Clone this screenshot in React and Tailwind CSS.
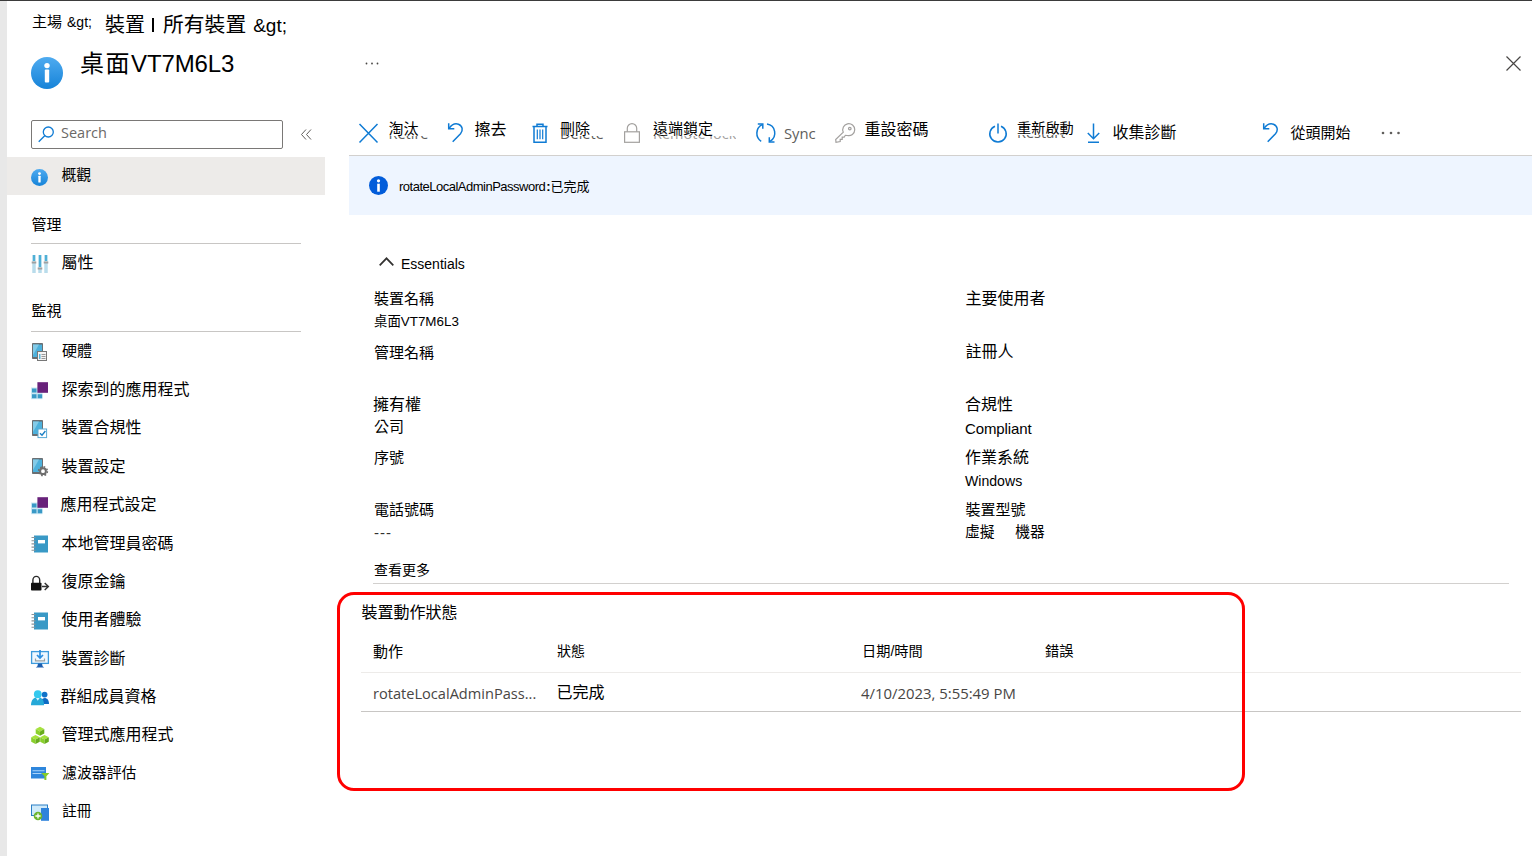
import clsx from 'clsx'

const BLUE = '#0f7bd4'

function InfoBadge({ size, id }) {
  return (
    <svg width={size} height={size} viewBox="0 0 32 32" className="shrink-0" aria-hidden>
      <defs>
        <linearGradient id={id} x1="0" y1="0" x2="0" y2="1">
          <stop offset="0" stopColor="#4fabf0" />
          <stop offset="1" stopColor="#1683d8" />
        </linearGradient>
      </defs>
      <circle cx="16" cy="16" r="16" fill={`url(#${id})`} />
      <circle cx="16" cy="8.6" r="2.7" fill="#fff" />
      <rect x="13.8" y="12.6" width="4.4" height="13" rx="1" fill="#fff" />
    </svg>
  )
}

/* ---------- sidebar icons, all on an 18px grid ---------- */

function Icon18({ children }) {
  return (
    <svg width="18" height="18" viewBox="0 0 18 18" className="shrink-0 overflow-visible" aria-hidden>
      {children}
    </svg>
  )
}

function SlidersIcon() {
  return (
    <Icon18>
      <path d="M1 0h4v18H1zM7 0h4v18H7zM13 0h4v18h-4z" fill="#dceef5" />
      <path d="M1.5 8h3v10h-3zM7.5 14h3v4h-3zM13.5 8h3v10h-3z" fill="#b9dceb" />
      <path d="M1.8 0h2.4v6H1.8zM7.8 0h2.4v12H7.8zM13.8 0h2.4v6h-2.4z" fill="#4fb0d6" />
      <path d="M0.7 6.5h4.6v2H0.7zM6.7 12.5h4.6v2H6.7zM12.7 6.5h4.6v2h-4.6z" fill="#a0a0a0" />
    </Icon18>
  )
}

function Phone() {
  return (
    <>
      <rect x="1" y="0" width="11" height="16" rx="0.8" fill="#6a6f73" />
      <rect x="2" y="1.6" width="9" height="12.4" fill="#4db1dc" />
      <path d="M2 1.6h6L2 12z" fill="#83cbe8" />
    </>
  )
}

function HardwareIcon() {
  return (
    <Icon18>
      <Phone />
      <rect x="6.5" y="8.5" width="9" height="9" fill="#f3f3f3" stroke="#777" />
      <path d="M8 11h1.5v5H8z" fill="#59b4d9" />
      <path d="M10.5 11.5h4M10.5 13.5h4M10.5 15.5h4" stroke="#999" />
    </Icon18>
  )
}

function ComplianceIcon() {
  return (
    <Icon18>
      <Phone />
      <rect x="7" y="9" width="8.6" height="8.6" fill="#fff" stroke="#59a9d4" />
      <path d="M9 13.2l2 2 3.4-4.2" fill="none" stroke="#1b7fc4" strokeWidth="1.4" />
    </Icon18>
  )
}

function ConfigIcon() {
  return (
    <Icon18>
      <Phone />
      <circle cx="12" cy="13.2" r="4.4" fill="none" stroke="#6e6e6e" strokeWidth="1.5" strokeDasharray="1.73 1.73" />
      <circle cx="12" cy="13.2" r="2.9" fill="#fff" stroke="#6e6e6e" strokeWidth="2" />
    </Icon18>
  )
}

function AppsIcon() {
  return (
    <Icon18>
      <path d="M0 5.5h11.5v11.7H0z" fill="#c9e6f3" />
      <path d="M1 6.5h4.5v4H1zM1 12.2h4.5v4H1zM6.7 12.2h4.5v4H6.7z" fill="#3999c6" />
      <rect x="6.4" y="0.2" width="10.6" height="10.6" fill="#68217a" />
    </Icon18>
  )
}

function NotebookIcon() {
  return (
    <Icon18>
      <rect x="3" y="0.5" width="14" height="17" fill="#3999c6" />
      <rect x="7" y="5" width="7" height="3.4" fill="#fff" />
      <path d="M0.5 2.5h4M0.5 5.7h4M0.5 8.9h4M0.5 12.1h4M0.5 15.3h4" stroke="#8b9499" strokeWidth="1.1" />
    </Icon18>
  )
}

function LockArrowIcon() {
  return (
    <Icon18>
      <path d="M1.9 9.5V6a3.4 3.6 0 0 1 6.8 0v3.5" fill="none" stroke="#2a2a2a" strokeWidth="1.4" />
      <rect x="0" y="8.8" width="10.5" height="7.7" rx="0.8" fill="#111" />
      <path d="M11 12.5h6.4M13.7 8.9l3.7 3.6-3.7 3.6" fill="none" stroke="#333" strokeWidth="1.4" />
    </Icon18>
  )
}

function DiagnosticsIcon() {
  return (
    <Icon18>
      <rect x="0.6" y="1.6" width="16.8" height="11.8" fill="#eef8ff" stroke="#3d9bdc" strokeWidth="1.3" />
      <path d="M9 0v7.4M6 5l3 3 3-3" fill="none" stroke="#2d8fe0" strokeWidth="1.7" />
      <path d="M4.5 8.5v2.3h9V8.5" fill="none" stroke="#9aa0a4" strokeWidth="1.2" />
      <path d="M7 13.6h4l.6 2.7 1.6 1.2H4.8l1.6-1.2z" fill="#1d5fb0" />
    </Icon18>
  )
}

function GroupIcon() {
  return (
    <Icon18>
      <circle cx="13.6" cy="5.6" r="2.9" fill="#1173c9" />
      <path d="M9.8 15c0-4 1.3-6 3.8-6s4.4 2 4.4 6z" fill="#0f6cc4" />
      <path d="M0 16.3c0-5 2.3-8 6.7-8s6.4 3 6.4 8z" fill="#26a9d8" />
      <circle cx="6.8" cy="5.2" r="3.9" fill="#35c9ee" />
      <path d="M5 9l1.8 2.8L8.6 9z" fill="#d8f5fc" />
    </Icon18>
  )
}

function Cube({ x, y }) {
  return (
    <g transform={`translate(${x} ${y})`}>
      <path d="M4.3 0l4.3 2.3-4.3 2.3L0 2.3z" fill="#a6e23c" />
      <path d="M0 2.3l4.3 2.3v4.4L0 6.7z" fill="#8ad02c" />
      <path d="M8.6 2.3l-4.3 2.3v4.4l4.3-2.3z" fill="#68ad1c" />
    </g>
  )
}

function CubesIcon() {
  return (
    <Icon18>
      <Cube x={4.7} y={-0.2} />
      <Cube x={0.2} y={8} />
      <Cube x={9.2} y={8} />
    </Icon18>
  )
}

function FilterIcon() {
  return (
    <Icon18>
      <rect x="0" y="2" width="15" height="11.5" fill="#2e86dc" />
      <path d="M1.5 5.7h12M1.5 8.5h9" stroke="#a9d3fb" strokeWidth="1.1" />
      <path d="M10.3 8h8.1l-3 3.3V15h-2v-3.7z" fill="#86cc2a" />
    </Icon18>
  )
}

function EnrollIcon() {
  return (
    <Icon18>
      <rect x="0.5" y="1" width="16" height="10.5" fill="#cfeafa" stroke="#2a7fc6" />
      <rect x="10" y="4" width="8" height="12.8" fill="#2f83db" />
      <circle cx="7" cy="12" r="4.3" fill="#6cb52d" />
      <path d="M7 9.4v5.2M4.4 12h5.2" stroke="#fff" strokeWidth="1.3" />
    </Icon18>
  )
}

/* ---------- command bar icons ---------- */

function Stroke({ w, color = BLUE, children, sw = 1.5 }) {
  return (
    <svg
      width={w}
      height="20"
      viewBox={`0 0 ${w} 20`}
      fill="none"
      stroke={color}
      strokeWidth={sw}
      className="shrink-0 overflow-visible"
      aria-hidden
    >
      {children}
    </svg>
  )
}

function CrossIcon() {
  return (
    <Stroke w={19}>
      <path d="M0.5 1l18 18.5M18.5 1l-18 18.5" />
    </Stroke>
  )
}

function UndoIcon() {
  return (
    <Stroke w={15}>
      <path d="M0.7 0.3v5.4h5.6" />
      <path d="M0.9 5.5C3.5 2 7 -0.1 10.5 1.3c4.2 1.7 4.8 6.3 2 9.4L4.7 18.8" />
    </Stroke>
  )
}

function TrashIcon() {
  return (
    <Stroke w={16}>
      <path d="M0.5 3.6h15M5 3.4V1.2h6v2.2" />
      <path d="M2 3.6v15.6h12V3.6" />
      <path d="M5.3 6.5v9.8M8 6.5v9.8M10.7 6.5v9.8" strokeWidth="1.2" />
    </Stroke>
  )
}

function LockIcon() {
  return (
    <Stroke w={16} color="#a3a19f" sw={1.2}>
      <rect x="0.6" y="8.8" width="14.8" height="10.5" />
      <path d="M3.3 8.8V5.3a4.7 4.7 0 0 1 9.4 0v3.5" />
    </Stroke>
  )
}

function SyncIcon() {
  return (
    <Stroke w={20}>
      <path d="M5.2 18.3C-0.8 14.5-0.7 5.2 6.2 1.7" />
      <path d="M1.8 1.1h5v4.7" />
      <path d="M11 1c8.5 1.3 10.8 12.3 3 17.4" />
      <path d="M18.5 19h-5.2v-4.7" />
    </Stroke>
  )
}

function KeyIcon() {
  return (
    <Stroke w={20} color="#a3a19f" sw={1.2}>
      <path d="M8.3 9.2A6 6 0 1 1 12.3 12.5L10.3 12.3 9.2 14.2H7.2V16.3H5.2V18.6L1 19.3 0.7 16.6z" />
      <circle cx="14.8" cy="5.6" r="1.3" />
    </Stroke>
  )
}

function PowerIcon() {
  return (
    <Stroke w={18}>
      <path d="M9 0.5v10" />
      <path d="M6 3.2a8.2 8.2 0 1 0 6 0" />
    </Stroke>
  )
}

function DownloadIcon() {
  return (
    <Stroke w={14}>
      <path d="M6.5 0.5v15.3M0.8 10l5.7 5.8L12.2 10M1 19.3h11" />
    </Stroke>
  )
}

const cjk = "font-['Liberation_Sans','Noto_Sans_CJK_TC',sans-serif]"
const segoe = "font-['Open_Sans','Noto_Sans_CJK_TC',sans-serif]"

const MONITOR_ITEMS = [
  { label: '硬體', Icon: HardwareIcon, cls: '-mt-[3px] ml-[13px] text-[15px]' },
  { label: '探索到的應用程式', Icon: AppsIcon, cls: '-mt-px ml-[12.5px] text-[16px]' },
  { label: '裝置合規性', Icon: ComplianceIcon, cls: '-mt-px ml-[12.5px] text-[16px]' },
  { label: '裝置設定', Icon: ConfigIcon, cls: '-mt-px ml-[12.5px] text-[16px]' },
  { label: '應用程式設定', Icon: AppsIcon, cls: '-mt-px ml-[11.5px] text-[16px]' },
  { label: '本地管理員密碼', Icon: NotebookIcon, cls: '-mt-px ml-[12.5px] text-[16px]' },
  { label: '復原金鑰', Icon: LockArrowIcon, cls: '-mt-px ml-[12.5px] text-[16px]' },
  { label: '使用者體驗', Icon: NotebookIcon, cls: '-mt-px ml-[12.5px] text-[16px]' },
  { label: '裝置診斷', Icon: DiagnosticsIcon, cls: '-mt-px ml-[12.5px] text-[16px]' },
  { label: '群組成員資格', Icon: GroupIcon, cls: '-mt-px ml-[11.5px] text-[16px]' },
  { label: '管理式應用程式', Icon: CubesIcon, cls: '-mt-[2px] ml-[12.5px] text-[16px]' },
  { label: '濾波器評估', Icon: FilterIcon, cls: '-mt-[2px] ml-[13px] text-[14.9px]' },
  { label: '註冊', Icon: EnrollIcon, cls: '-mt-[3px] ml-[13px] text-[14.8px]' },
]

// ghost = lower edge of the English caption that shows under the translated one
const COMMANDS = [
  { label: '淘汰', Icon: CrossIcon, width: 'w-[89px]', text: 'ml-[10.5px] text-[15px] -mt-[7px]', ghost: 'Retire' },
  { label: '擦去', Icon: UndoIcon, width: 'w-[84px]', text: 'ml-[11.5px] text-[16px] -mt-[6px]' },
  { label: '刪除', Icon: TrashIcon, width: 'w-[92px]', text: 'ml-[12px] text-[15px] -mt-[7px]', ghost: 'Delete' },
  {
    label: '遠端鎖定',
    Icon: LockIcon,
    width: 'w-[132px]',
    text: 'ml-[13px] text-[15px] -mt-[7px]',
    ghost: 'Remote lock',
    ghostColor: 'text-[#a3a19f]',
  },
  { label: 'Sync', Icon: SyncIcon, width: 'w-[79px]', latin: true, text: 'ml-[8px] text-[14.8px] mt-px' },
  { label: '重設密碼', Icon: KeyIcon, width: 'w-[154px]', text: 'ml-[9.5px] text-[16px] -mt-[6px]' },
  { label: '重新啟動', Icon: PowerIcon, width: 'w-[98px]', text: 'ml-[10px] text-[14.2px] -mt-[9px]', ghost: 'Restart' },
  { label: '收集診斷', Icon: DownloadIcon, width: 'w-[176px]', text: 'ml-[11.5px] text-[16px] mt-px' },
  { label: '從頭開始', Icon: UndoIcon, width: 'w-[118px]', text: 'ml-[12.5px] text-[15px]' },
]

const ESSENTIALS = [
  [
    { label: '裝置名稱', value: '桌面VT7M6L3', labelCls: 'text-[15px]', valueCls: 'pt-px text-[13.4px]' },
    { label: '管理名稱', labelCls: 'pt-px text-[15px]' },
    { label: '擁有權', value: '公司', labelCls: '-ml-px text-[16px]', valueCls: 'text-[15px]' },
    { label: '序號', labelCls: 'pt-px text-[15px]' },
    { label: '電話號碼', value: '---', labelCls: 'text-[15px]', valueCls: 'pt-px text-[15px] tracking-[1px] text-[#323130]' },
  ],
  [
    { label: '主要使用者', labelCls: 'text-[16px]' },
    { label: '註冊人', labelCls: 'text-[16px]' },
    { label: '合規性', value: 'Compliant', labelCls: '-ml-[0.5px] text-[16px]', valueCls: '-ml-[0.5px] pt-[2px] text-[15px] tracking-[-0.1px]' },
    { label: '作業系統', value: 'Windows', labelCls: '-ml-[0.5px] pt-px text-[16px]', valueCls: '-ml-[0.5px] pt-px text-[14.1px]' },
    { label: '裝置型號', value: '虛擬     機器', labelCls: 'text-[15px]', valueCls: '-ml-[0.5px] text-[14.8px]' },
  ],
]

function CommandButton({ label, Icon, width, text, latin, ghost, ghostColor = 'text-[#605e5c]' }) {
  return (
    <div className={clsx('flex h-[46px] items-center', width)}>
      <Icon />
      <span className={clsx('relative whitespace-nowrap leading-5', text, latin ? `${segoe} text-[#605e5c]` : 'text-black')}>
        {label}
        {ghost && (
          <span className={clsx('absolute left-0 top-[17px] flex h-[3px] items-end overflow-hidden text-[14.5px]', segoe, ghostColor)}>
            <span className="leading-[11px]">{ghost}</span>
          </span>
        )}
      </span>
    </div>
  )
}

function Sidebar() {
  return (
    <aside className="w-[318px] shrink-0">
      <div className="flex h-[47px] items-start pl-6 pt-[10px]">
        <div className="flex h-[29px] w-[252px] items-center rounded-[2px] border border-[#7a7876] pl-[6px]">
          <svg width="17" height="17" viewBox="0 0 17 17" fill="none" stroke={BLUE} strokeWidth="1.3" aria-hidden>
            <circle cx="10.3" cy="6" r="5" />
            <path d="M6.7 9.7l-6 6" />
          </svg>
          <span className={clsx('-mt-[3px] ml-[6px] text-[14.5px] leading-5 text-[#6b6967]', segoe)}>Search</span>
        </div>
        <svg width="11" height="11" viewBox="0 0 11 11" fill="none" stroke="#605e5c" className="ml-[18px] mt-[9px]" aria-hidden>
          <path d="M5 0.5l-4.5 5 4.5 5M10 0.5l-4.5 5 4.5 5" />
        </svg>
      </div>

      <div className="flex h-[38px] items-center bg-[#edebe9] pl-6">
        <div className="mt-[2px]">
          <InfoBadge size={17} id="navInfo" />
        </div>
        <span className="-mt-[2px] ml-[13.5px] text-[14.8px] leading-5">概觀</span>
      </div>

      <div className="ml-6 flex h-[49px] w-[270px] items-center border-b border-[#c8c6c4] pl-[0.5px] pt-[11px] text-[15px] leading-5">
        管理
      </div>
      <div className="flex h-[38px] items-center pl-6 pt-[2px]">
        <SlidersIcon />
        <span className="-mt-[3px] ml-[12.5px] text-[16px] leading-5">屬性</span>
      </div>
      <div className="ml-6 flex h-[50px] w-[270px] items-center border-b border-[#c8c6c4] pl-[0.5px] pt-[9px] text-[15px] leading-5">
        監視
      </div>
      <nav className="pt-px">
        {MONITOR_ITEMS.map(({ label, Icon, cls }) => (
          <div key={label} className="flex h-[38.4px] items-center pl-6">
            <Icon />
            <span className={clsx('whitespace-nowrap leading-5', cls)}>{label}</span>
          </div>
        ))}
      </nav>
    </aside>
  )
}

function Essentials() {
  return (
    <section className="pl-[25px]">
      <div className="flex h-[72px] items-end pb-[13px] pl-[5px]">
        <svg width="15" height="9" viewBox="0 0 15 9" fill="none" stroke="#323130" strokeWidth="1.7" className="mb-[8px]" aria-hidden>
          <path d="M0.7 8.3l6.8-7 6.8 7" />
        </svg>
        <span className="ml-[7px] text-[14px] leading-5">Essentials</span>
      </div>
      <div className="flex">
        {ESSENTIALS.map((column, i) => (
          <div key={i} className={i === 0 ? 'w-[591.5px]' : ''}>
            {column.map((item) => (
              <dl key={item.label} className="h-[52.8px]">
                <dt className={clsx('leading-[23px]', item.labelCls)}>{item.label}</dt>
                {item.value && <dd className={clsx('whitespace-pre leading-[22px]', item.valueCls)}>{item.value}</dd>}
              </dl>
            ))}
          </div>
        ))}
      </div>
      <div className="-ml-px mr-[23px] flex h-[33px] items-end border-b border-[#d2d0ce] pb-[3px] pl-px text-[14px] leading-5">
        查看更多
      </div>
    </section>
  )
}

function ActionStatus() {
  return (
    <section className="relative mr-[11px] pl-3">
      {/* red call-out round the status table */}
      <div className="pointer-events-none absolute -left-[12px] top-[8px] h-[199px] w-[908px] rounded-[17px] border-[3px] border-[#ff0000]" />
      <h2 className="pl-[0.5px] pt-[19px] text-[16px] leading-5">裝置動作狀態</h2>
      <div className="grid h-[50px] grid-cols-[184px_305px_183px_1fr] items-center border-b border-[#edebe9] pl-3 pt-[8px] leading-5">
        <span className="pt-px text-[15px]">動作</span>
        <span className="text-[14px]">狀態</span>
        <span className="-mt-px text-[14.2px]">日期/時間</span>
        <span className="text-[14.2px]">錯誤</span>
      </div>
      <div className="grid h-[39px] grid-cols-[184px_304px_183px_1fr] items-center border-b border-[#c8c6c4] pl-3 pt-[2px] leading-5">
        <span className={clsx('text-[14.6px] text-[#484644]', segoe)}>rotateLocalAdminPass...</span>
        <span className="-ml-[0.5px] text-[16px]">已完成</span>
        <span className={clsx('text-[14.9px] text-[#484644]', segoe)}>4/10/2023, 5:55:49 PM</span>
      </div>
    </section>
  )
}

export default function App() {
  return (
    <div className={clsx('h-[856px] w-[1532px] overflow-hidden border-t border-t-[#3b3b3b] bg-white text-black', cjk)}>
      <div className="h-full border-l-[7px] border-[#e8e8e8]">
        <header className="h-[109px] pl-6">
          <div className="flex h-[43px] items-center whitespace-nowrap">
            <span className="-mt-px ml-px w-[73px] text-[15px] leading-5">
              主場<span className="ml-[5px] text-[14px]">&amp;gt;</span>
            </span>
            <span className="mt-[4px] text-[20px] leading-6">裝置</span>
            <span className="ml-[7px] mt-[5px] h-[14px] w-[2px] bg-black" />
            <span className="ml-[9px] mt-[4px] text-[20.8px] leading-6">所有裝置</span>
            <span className="ml-[7px] mt-[6px] text-[19px] leading-6">&amp;gt;</span>
          </div>
          <div className="flex items-start">
            <div className="mt-[13px]">
              <InfoBadge size={32} id="titleInfo" />
            </div>
            <h1 className="ml-[17px] mt-[4px] w-[285px] whitespace-nowrap text-[24px] leading-8 tracking-[-0.1px]">
              <span className="tracking-[1.5px]">桌面</span>VT7M6L3
            </h1>
            <svg width="14" height="3" viewBox="0 0 14 3" fill="#484644" className="mt-[18px]" aria-hidden>
              <circle cx="1.5" cy="1.5" r="0.9" />
              <circle cx="7" cy="1.5" r="0.9" />
              <circle cx="12.5" cy="1.5" r="0.9" />
            </svg>
            <svg width="15" height="15" viewBox="0 0 15 15" stroke="#484644" strokeWidth="1.2" className="ml-auto mr-[11px] mt-[12px]" aria-hidden>
              <path d="M0.5 0.5l14 14M14.5 0.5l-14 14" />
            </svg>
          </div>
        </header>

        <div className="flex">
          <Sidebar />
          <main className="ml-6 min-w-0 flex-1">
            <div className="flex h-[46px] items-center border-b border-[#d2d0ce] pl-[10px]">
              {COMMANDS.map((cmd) => (
                <CommandButton key={cmd.label} {...cmd} />
              ))}
              <svg width="20" height="4" viewBox="0 0 20 4" fill="#605e5c" aria-hidden>
                <circle cx="2" cy="2" r="1.3" />
                <circle cx="10" cy="2" r="1.3" />
                <circle cx="17.5" cy="2" r="1.3" />
              </svg>
            </div>
            <div className="flex h-[59px] items-center bg-[#eef5ff] pl-[20px]">
              <svg width="19" height="19" viewBox="0 0 19 19" aria-hidden>
                <circle cx="9.5" cy="9.5" r="9.5" fill="#015cda" />
                <circle cx="9.5" cy="4.8" r="1.6" fill="#fff" />
                <path d="M8.2 7.7h2.6v8H8.2z" fill="#fff" />
              </svg>
              <span className="ml-[11px] mt-[2px] text-[13px] leading-5">
                <span className="tracking-[-0.5px]">rotateLocalAdminPassword</span>
                <span className="ml-px font-bold">:</span>已完成
              </span>
            </div>
            <Essentials />
            <ActionStatus />
          </main>
        </div>
      </div>
    </div>
  )
}
